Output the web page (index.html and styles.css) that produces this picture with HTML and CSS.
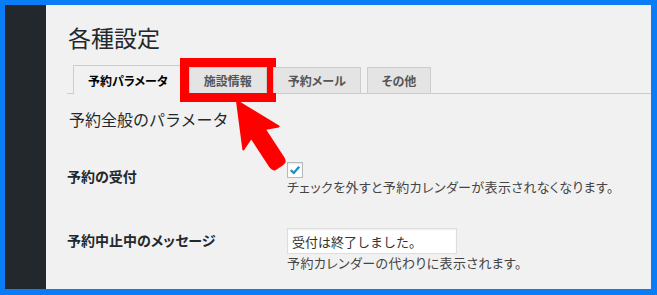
FILE: index.html
```html
<!DOCTYPE html>
<html lang="ja">
<head>
    <meta charset="UTF-8">
    <meta name="viewport" content="width=device-width, initial-scale=1.0">
    <title>各種設定</title>
    <link rel="stylesheet" href="styles.css">
</head>
<body>
    <div class="frame">
        <div class="sidebar"></div>
        <div class="wrap">
            <h1>各種設定</h1>
            <nav class="tabs">
                <a class="tab active">予約パラメータ</a>
                <a class="tab marked">施設情報</a>
                <a class="tab">予約メール</a>
                <a class="tab">その他</a>
            </nav>
            <h2>予約全般のパラメータ</h2>
            <div class="row">
                <div class="label">予約の受付</div>
                <div class="field">
                    <span class="checkbox">
                        <svg viewBox="0 0 16 16" width="14" height="14"><path d="M3.2 8.2 L6.6 11.4 L12.8 4.2" fill="none" stroke="#1e8cbe" stroke-width="2.6"/></svg>
                    </span>
                    <p class="desc">チェックを外すと予約カレンダーが表示されなくなります。</p>
                </div>
            </div>
            <div class="row second">
                <div class="label">予約中止中のメッセージ</div>
                <div class="field">
                    <input class="text" type="text" value="受付は終了しました。">
                    <p class="desc">予約カレンダーの代わりに表示されます。</p>
                </div>
            </div>
        </div>
        <svg class="pointer" viewBox="0 0 70 80" width="70" height="80">
            <g transform="translate(13,9) rotate(-33)">
                <path d="M0 0 L21 44 L8 38.5 L8 73 Q8 78 4 78 L-4 78 Q-8 78 -8 73 L-8 38.5 L-21 44 Z" fill="#f00" stroke="#f00" stroke-width="2" stroke-linejoin="round"/>
            </g>
        </svg>
    </div>
</body>
</html>
```

FILE: styles.css
```css
body { margin: 0; overflow: hidden; font-family: "Noto Sans CJK JP", "Noto Sans", sans-serif; color: #23282d; }
.frame {
    position: relative;
    display: flex;
    height: 295px;
    box-sizing: border-box;
    border: solid #0a7cf5;
    border-width: 5px 6px 6px 5px;
    background: #f1f1f1;
}
.sidebar { width: 41px; flex: none; background: #23282d; }
.wrap { flex: 1; padding-left: 21px; }

h1 { margin: 17px 0 0 1px; font-size: 23px; line-height: 30px; font-weight: 400; }

.tabs {
    display: flex;
    align-items: flex-end;
    gap: 6px;
    margin-top: 13px;
    padding-left: 6px;
    border-bottom: 1px solid #ccc;
}
.tab {
    padding: 0 14px;
    border: 1px solid #ccc;
    border-bottom: none;
    background: #e4e4e4;
    color: #555;
    font-size: 12px;
    font-weight: 700;
    line-height: 25px;
    font-feature-settings: "palt";
}
.tab.active {
    padding-top: 2px;
    padding-bottom: 1px;
    margin-bottom: -1px;
    background: #f1f1f1;
    color: #000;
}
.tab.marked { outline: 9px solid #f00; }

h2 { margin: 13px 0 0 2px; font-size: 16px; line-height: 24px; font-weight: 400; }

.row { display: grid; grid-template-columns: 220px 1fr; margin-top: 31px; }
.row.second { margin-top: 32px; }
.label { padding-top: 4px; font-size: 14px; line-height: 20px; font-weight: 700; font-feature-settings: "palt"; }
.second .label { padding-top: 2px; }

.checkbox {
    display: flex;
    align-items: center;
    justify-content: center;
    width: 16px;
    height: 16px;
    box-sizing: border-box;
    border: 1px solid #b4b9be;
    background: #fff;
    box-shadow: inset 0 1px 2px rgba(0,0,0,.1);
}
.desc { margin: 0; font-size: 13px; line-height: 18px; letter-spacing: 0.4px; color: #444; font-feature-settings: "palt"; }

.text {
    display: block;
    width: 170px;
    height: 26px;
    box-sizing: border-box;
    margin: 0;
    padding: 0 4px;
    border: 1px solid #ddd;
    background: #fff;
    box-shadow: inset 0 1px 2px rgba(0,0,0,.07);
    font-family: inherit;
    font-size: 13px;
    color: #333;
}

.pointer { position: absolute; left: 219px; top: 87px; }
```
